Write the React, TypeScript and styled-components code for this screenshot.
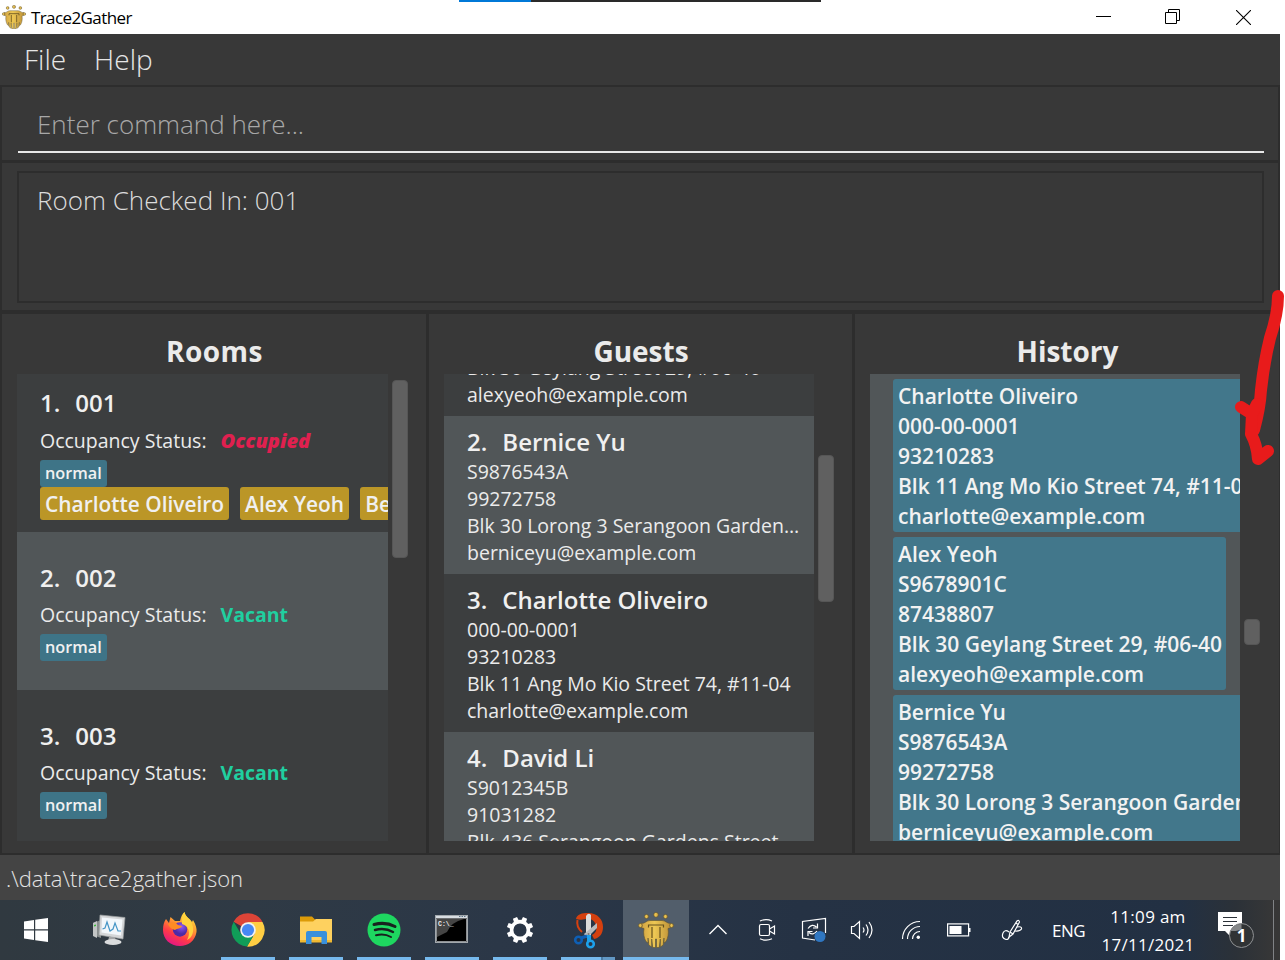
import React from "react";
import styled, { createGlobalStyle, css } from "styled-components";

const Global = createGlobalStyle`
  * { box-sizing: border-box; }
  html, body { margin: 0; padding: 0; background: #fff; overflow: hidden; }
  body { font-family: "Open Sans", "Noto Sans", sans-serif; }
`;

const Desktop = styled.div`
  position: relative;
  width: 1285px;
  height: 960px;
  overflow: hidden;
  background: #fff;
`;

const Window = styled.div`
  width: 1280px;
  height: 900px;
  display: flex;
  flex-direction: column;
  background: #383838;
`;

const TitleBar = styled.header`
  position: relative;
  height: 34px;
  flex: none;
  display: flex;
  align-items: center;
  padding: 0 2px;
  background: #fff;
  color: #000;
`;

const TitleText = styled.span`
  flex: 1;
  margin-left: 5px;
  font-size: 17px;
  letter-spacing: -0.6px;
  line-height: 32px;
  padding-top: 2px;
`;

const TopProgress = styled.div`
  position: absolute;
  left: 459px;
  top: 0;
  width: 362px;
  height: 2px;
  background: linear-gradient(to right, #0078d7 72px, #2a2a2a 72px);
`;

const WindowButton = styled.div`
  width: 70px;
  height: 34px;
  display: flex;
  align-items: center;
  justify-content: center;
`;

const MenuBar = styled.nav`
  height: 51px;
  flex: none;
  display: flex;
  padding-left: 24px;
  gap: 28px;
`;

const MenuItem = styled.span`
  font-size: 28px;
  font-weight: 300;
  line-height: 51px;
  color: #e6e6e6;
`;

const paneBorder = css`
  border: 2px solid #2d2d2d;
`;

const CommandPane = styled.section`
  ${paneBorder}
  border-bottom-width: 1px;
  height: 76px;
  flex: none;
  padding: 12px 14px 0 16px;
`;

const CommandField = styled.div`
  height: 54px;
  border-bottom: 2px solid #e8e8e8;
  padding-left: 19px;
  font-size: 26px;
  font-weight: 300;
  line-height: 50px;
  color: #a8a8a8;
`;

const ResultPane = styled.section`
  ${paneBorder}
  height: 151px;
  flex: none;
  padding: 8px 14px 8px 15px;
`;

const ResultBox = styled.div`
  ${paneBorder}
  height: 132px;
  padding: 9px 18px;
  font-size: 26px;
  font-weight: 300;
  line-height: 37px;
  color: #dcdcdc;
`;

const Columns = styled.main`
  display: flex;
  height: 543px;
  flex: none;
`;

const Column = styled.section<{ $w: number }>`
  ${paneBorder}
  border-right-width: 1px;
  width: ${(p) => p.$w}px;
  padding: 15px 15px 0;
  flex: none;
`;

const Heading = styled.h2<{ $ls?: number }>`
  margin: 0;
  height: 45px;
  padding-left: 1px;
  font-size: 28px;
  font-weight: 700;
  line-height: 44px;
  letter-spacing: ${(p) => p.$ls ?? 0}px;
  text-align: center;
  color: #ebebeb;
`;

const ListArea = styled.div`
  display: flex;
  height: 467px;
`;

const List = styled.div<{ $w: number; $scroll?: number }>`
  width: ${(p) => p.$w}px;
  height: 467px;
  overflow: hidden;
  background: #3c3e3f;
  flex: none;
  & > :first-child { margin-top: ${(p) => -(p.$scroll ?? 0)}px; }
`;

const Track = styled.div<{ $top: number; $h: number }>`
  width: 16px;
  height: ${(p) => p.$h}px;
  margin: ${(p) => p.$top}px 0 0 4px;
  border-radius: 4px;
  background: #606060;
  border: 1px solid #565656;
  flex: none;
`;

const Row = styled.article<{ $alt?: boolean; $top: number }>`
  height: 158px;
  padding: ${(p) => p.$top}px 0 0 23px;
  background: ${(p) => (p.$alt ? "#515658" : "#3c3e3f")};
  white-space: nowrap;
  overflow: hidden;
  color: #f0f0f0;
`;

const Name = styled.div`
  display: flex;
  gap: 15px;
  font-size: 24px;
  font-weight: 600;
  line-height: 33px;
`;

const Detail = styled.div`
  width: 335px;
  font-size: 19.5px;
  font-weight: 400;
  line-height: 27px;
  overflow: hidden;
  text-overflow: ellipsis;
  color: #ebebeb;
`;

const StatusLine = styled.div<{ $gap: number }>`
  display: flex;
  gap: 14px;
  margin: ${(p) => p.$gap}px 0 6px;
  font-size: 19.5px;
  line-height: 27px;
  color: #ebebeb;
`;

const Status = styled.span<{ $occupied?: boolean }>`
  font-weight: ${(p) => (p.$occupied ? 800 : 700)};
  font-size: ${(p) => (p.$occupied ? 20 : 19.5)}px;
  font-style: ${(p) => (p.$occupied ? "italic" : "normal")};
  color: ${(p) => (p.$occupied ? "#e0204f" : "#20cfa0")};
`;

const Tags = styled.div`
  display: flex;
  gap: 11px;
`;

const Tag = styled.span`
  padding: 0 5px;
  border-radius: 3px;
  background: #3e7487;
  font-size: 16.3px;
  font-weight: 600;
  line-height: 27px;
`;

const GuestTag = styled.span`
  height: 33px;
  padding: 1px 5px 0;
  border-radius: 3px;
  background: #bb9627;
  font-size: 20.9px;
  font-weight: 600;
  line-height: 33px;
`;

const HistoryList = styled(List)`
  background: #515658;
  padding: 5px 0 0 23px;
  display: flex;
  flex-direction: column;
  align-items: flex-start;
  gap: 5px;
`;

const HistoryCard = styled.article`
  flex: none;
  height: 153px;
  padding: 2px 4px 0 5px;
  border-radius: 3px;
  background: #42778b;
  font-size: 21px;
  font-weight: 600;
  line-height: 30px;
  white-space: nowrap;
  color: #f2f2f2;
`;

const StatusBar = styled.footer`
  height: 45px;
  flex: none;
  padding-left: 6px;
  font-size: 22px;
  font-weight: 300;
  line-height: 47px;
  color: #e4e4e4;
  background: #444;
`;

const Taskbar = styled.div`
  width: 1280px;
  height: 60px;
  display: flex;
  color: #fff;
  background: linear-gradient(to right, #303940 0, #2f3a45 250px, #2b3747 500px, #253244 800px, #223043 1180px, #2b3138 1235px, #373737 1275px);
`;

const TaskButton = styled.div<{ $w: number; $open?: boolean; $active?: boolean; $stack?: boolean }>`
  position: relative;
  width: ${(p) => p.$w}px;
  height: 60px;
  flex: none;
  display: flex;
  align-items: center;
  justify-content: center;
  background: ${(p) => (p.$active ? "#525e6b" : "transparent")};
  ${(p) =>
    (p.$open || p.$active) &&
    css`
      &::after {
        content: "";
        position: absolute;
        bottom: 0;
        left: ${p.$active ? 0 : 7}px;
        width: ${p.$active ? p.$w : 54}px;
        height: 3px;
        background: ${p.$stack ? "linear-gradient(to right, #76b9ed 40px, #4b7ba3 40px, #4b7ba3 42px, #6298c4 42px)" : "#76b9ed"};
      }
    `}
`;

const Tray = styled.div<{ $w: number }>`
  width: ${(p) => p.$w}px;
  height: 60px;
  flex: none;
  display: flex;
  align-items: center;
  justify-content: center;
`;

const Lang = styled.div`
  width: 63px;
  margin-left: -8px;
  flex: none;
  text-align: center;
  font-size: 17px;
  letter-spacing: -0.5px;
  line-height: 61px;
`;

const Clock = styled.div`
  width: 98px;
  flex: none;
  padding: 3px 2px 0 0;
  text-align: center;
  font-size: 17px;
  line-height: 28px;
  letter-spacing: 0.3px;
  white-space: nowrap;
`;

const ShowDesktop = styled.div`
  width: 2px;
  height: 60px;
  margin-left: auto;
  margin-right: 6px;
  background: #808386;
`;

const Annotation = styled.svg`
  position: absolute;
  left: 1225px;
  top: 280px;
`;

function Shield({ size }: { size: number }) {
  return (
    <svg width={size} height={size} viewBox="0 0 36 36">
      <defs>
        <linearGradient id="gold" x1="0" x2="1">
          <stop offset="0" stopColor="#d1a443" />
          <stop offset="0.45" stopColor="#edc753" />
          <stop offset="1" stopColor="#bd9138" />
        </linearGradient>
      </defs>
      <g fill="url(#gold)" stroke="#5c5231" strokeWidth="0.6">
        <circle cx="8.500" cy="4.500" r="2.100" />
        <circle cx="18" cy="2.800" r="2.400" />
        <circle cx="27.500" cy="4.500" r="2.100" />
        <path d="M3 11.300C7 12 8 8.500 12 8.500H24C28 8.500 29 12 33 11.300V15.500L30 16.500C31 21 30 26 28 29.500L26 31V26L25.200 33L22.300 35V27L21.300 35.500H18.500V27H17.500V35.500H14.700L13.700 27V35L10.800 33L10 26V31L8 29.500C6 26 5 21 6 16.500L3 15.500Z" />
        <circle cx="2.400" cy="13.500" r="2" />
        <circle cx="33.600" cy="13.500" r="2" />
      </g>
      <path d="M10.500 15.500V13H25.500V15.500M14 15V26M22 15V26" fill="none" stroke="#66521f" strokeWidth="1.200" />
    </svg>
  );
}

function WindowsLogo() {
  return (
    <svg width="24" height="24" viewBox="0 0 24 24" fill="#fff">
      <path d="M0 3.400L10 2V11.300H0ZM11.200 1.800L24 0V11.300H11.200ZM0 12.600H10V22L0 20.600ZM11.200 12.600H24V24L11.200 22.200Z" />
    </svg>
  );
}

function Monitor() {
  return (
    <svg width="34" height="32" viewBox="0 0 34 32">
      <path d="M1 9L9 6V24L1 21Z" fill="#888d8d" />
      <path d="M1 9L5 7V24L1 22Z" fill="#c2c5c5" />
      <path d="M2 11L4 10.500V12L2 12.500Z" fill="#3cba3c" />
      <path d="M8 1L33 3.500L31 25L7 21Z" fill="#d4d6d8" stroke="#9a9d9f" strokeWidth=".7" />
      <path d="M10 3.500L30.500 5.500L29 21.500L9.500 18.500Z" fill="#f2f7fb" />
      <path d="M10.500 15L13 14L15 8L18 17L21 15L23 9L26 17L29 17" fill="none" stroke="#4595c6" strokeWidth="1.200" />
      <path d="M17 23H23L24 27H16Z" fill="#a3a5a7" />
      <ellipse cx="21" cy="28" rx="8.500" ry="3" fill="#dadcdd" />
    </svg>
  );
}

function Firefox() {
  return (
    <svg width="36" height="38" viewBox="0 0 36 38">
      <defs>
        <linearGradient id="fox" x1=".8" y1="0" x2=".3" y2="1">
          <stop offset="0" stopColor="#fff044" />
          <stop offset=".4" stopColor="#ff9831" />
          <stop offset=".7" stopColor="#ff3b47" />
          <stop offset="1" stopColor="#e21587" />
        </linearGradient>
        <radialGradient id="globe" cx=".6" cy=".3">
          <stop offset="0" stopColor="#9059f4" />
          <stop offset="1" stopColor="#4e2aa5" />
        </radialGradient>
      </defs>
      <path d="M4 8L7 12L8.500 6L13 10L18 10C19 6 20 3 22.500 1C23 6 28 7 30 11L31 9C34 14 35 18 34.500 21C33 30 26 35 18 35C8 35 1 28 1 19C1 14 2 11 4 8Z" fill="url(#fox)" />
      <circle cx="18" cy="18.500" r="7.200" fill="url(#globe)" />
      <path d="M6 13C10 10 14 11 16 14L20 15C19 18 15 17 13 19Q8 18 6 13Z" fill="#ff8b24" />
      <path d="M20 9C20 5 21 3 22.500 1C23 6 29 8 30 13C33 20 30 27 25 29C29 22 27 15 20 13Z" fill="#ffd23d" />
    </svg>
  );
}

function Chrome() {
  return (
    <svg width="34" height="34" viewBox="0 0 34 34">
      <path d="M17 17L2.600 8.700A16.600 16.600 0 0 1 31.400 8.700Z" fill="#dc4437" />
      <path d="M17 9H31.500A16.600 16.600 0 0 1 16 33.600L24 20Z" fill="#ffce43" />
      <path d="M2.700 8.700L10 21L17 24L22 23.500L16 33.600A16.600 16.600 0 0 1 2.700 8.700Z" fill="#109d58" />
      <circle cx="17" cy="17" r="7.800" fill="#f1f1f1" />
      <circle cx="17" cy="17" r="6.100" fill="#4688f4" />
    </svg>
  );
}

function Folder() {
  return (
    <svg width="34" height="30" viewBox="0 0 34 30">
      <path d="M1 1.500H13L16 4.500H20V12H1Z" fill="#dc9b08" />
      <path d="M1 6.500H14L17 4H33V27H1Z" fill="#fed15f" />
      <path d="M1 25H33V27.500H1Z" fill="#f0b932" />
      <path d="M7 29V18Q7 16 9 16H26Q28 16 28 18V29H22.500V22H12.500V29Z" fill="#3990dc" />
    </svg>
  );
}

function Spotify() {
  return (
    <svg width="34" height="34" viewBox="0 0 34 34">
      <circle cx="17" cy="17" r="16.500" fill="#1ed760" />
      <g fill="none" stroke="#18211e" strokeLinecap="round">
        <path d="M7 11.500Q18.500 8.500 28 13.500" strokeWidth="3" />
        <path d="M8 17Q18 14.500 26 19" strokeWidth="2.500" />
        <path d="M9 22.300Q17.500 20.300 24 24" strokeWidth="2" />
      </g>
    </svg>
  );
}

const PromptGlyphs = styled.text`
  font-family: "Liberation Mono", monospace;
  font-size: 6.5px;
  font-weight: 700;
`;

function Terminal() {
  return (
    <svg width="34" height="30" viewBox="0 0 34 30">
      <rect x=".5" y=".5" width="32" height="27" fill="#000" stroke="#a2a8ad" />
      <path d="M1 1H32V3.500H1Z" fill="#d8dde2" />
      <path d="M24 1.500H31" stroke="#5e7488" strokeDasharray="1.500 1" />
      <path d="M2 4H29Q16 7 12 17L2 22Z" fill="#454545" />
      <path d="M1.500 4V26.500H31.500V4" fill="none" stroke="#8c8f92" />
      <PromptGlyphs x="3" y="10.500" fill="#eee">C:\_</PromptGlyphs>
    </svg>
  );
}

function Gear() {
  const teeth = [0, 45, 90, 135, 180, 225, 270, 315];
  return (
    <svg width="28" height="28" viewBox="-14 -14 28 28">
      {teeth.map((a) => (
        <path key={a} d="M-2.700 -8L-2.200 -13.200H2.200L2.700 -8Z" fill="#fff" transform={`rotate(${a + 22.5})`} />
      ))}
      <circle r="8.400" fill="none" stroke="#fff" strokeWidth="3.600" />
    </svg>
  );
}

function Snip() {
  return (
    <svg width="32" height="38" viewBox="0 0 32 38">
      <path d="M3 8C4 3 9 2 15 2C25 2 30 9 30 16C30 22 27 27 21 28L19 24C23 22 24 19 23 15C22 9 17 7 13 8C8 9 6 9 3 8Z" fill="#d5400f" />
      <path d="M4.500 9Q3 16 9 21" fill="none" stroke="#d5400f" strokeWidth="2" />
      <path d="M13 5Q15.500 1 18 4V26H13Z" fill="#dcdcdc" />
      <path d="M24 12L24 17L14 27L11 23Z" fill="#b8babc" />
      <circle cx="5.500" cy="29" r="3.300" fill="none" stroke="#0e5fb5" strokeWidth="2.600" />
      <path d="M8 27L14 25" stroke="#0e5fb5" strokeWidth="3" />
      <circle cx="17.500" cy="33" r="3.300" fill="none" stroke="#1da1ec" strokeWidth="2.600" />
      <path d="M16 24V30" stroke="#1da1ec" strokeWidth="4" />
      <circle cx="15.500" cy="23" r="1" fill="#777" />
    </svg>
  );
}

function ChevronUp() {
  return (
    <svg width="20" height="12" viewBox="0 0 20 12">
      <path d="M1.500 10L10 1.500L18.500 10" fill="none" stroke="#fff" strokeWidth="1.400" />
    </svg>
  );
}

function MeetNow() {
  return (
    <svg width="18" height="24" viewBox="0 0 18 24" fill="none" stroke="#fff" strokeWidth="1.200">
      <rect x="1.500" y="6.500" width="10" height="11" rx="1.500" />
      <path d="M11.500 11L16.500 8V16L11.500 13M2 3Q8 .2 14 3M2 20.800Q8 23.600 14 20.800" />
    </svg>
  );
}

function UpdateIcon() {
  return (
    <svg width="26" height="26" viewBox="0 0 26 26" fill="none" stroke="#fff" strokeWidth="1.200">
      <path d="M14 23L1.500 21V4.500L24.500 1.500V16" />
      <path d="M7 11.500Q11 6 15.500 10M16.500 6.500V11H12M16 14Q12 19 8 15.500M7 19V14.500H11.500" />
      <circle cx="19" cy="19.500" r="5.500" fill="#2f76c1" stroke="none" />
    </svg>
  );
}

function Speaker() {
  return (
    <svg width="24" height="20" viewBox="0 0 24 20" fill="none" stroke="#fff" strokeWidth="1.200">
      <path d="M1.500 6.500H4L9.500 1.500V18.500L4 13.500H1.500Z" />
      <path d="M13 7.500Q15 10 13 12.500M16 4.500Q20 10 16 15.500M19 2Q25 10 19 18" />
    </svg>
  );
}

function Wifi() {
  return (
    <svg width="20" height="20" viewBox="0 0 20 20" fill="none" stroke="#fff" strokeWidth="1.200">
      <path d="M1.500 19A17.500 17.500 0 0 1 19 1.500M6.500 19A12.500 12.500 0 0 1 19 6.500M11.500 19A7.500 7.500 0 0 1 19 11.500" />
      <circle cx="17.300" cy="17.300" r="1.700" fill="#fff" stroke="none" />
    </svg>
  );
}

function Battery() {
  return (
    <svg width="24" height="14" viewBox="0 0 24 14">
      <rect x=".6" y=".9" width="21" height="12" fill="none" stroke="#fff" strokeWidth="1.200" />
      <path d="M2.500 3H14.500V11H2.500ZM22 5H23.500V9H22Z" fill="#fff" />
    </svg>
  );
}

function PenIcon() {
  return (
    <svg width="22" height="22" viewBox="0 0 22 22" fill="none" stroke="#fff" strokeWidth="1.200">
      <path d="M8 18L9 13L16 2Q18 .5 18.500 3L12 15ZM15 4L17 5.500M9 13L12 15" />
      <path d="M8 13Q4 10 2 14Q0 19 5 20.500Q8 20.500 8 18M16 8Q21 7 20.500 10Q19 12.500 14 12" />
    </svg>
  );
}

const BadgeText = styled.text`
  font-family: "Open Sans", sans-serif;
  font-size: 17px;
  font-weight: 700;
`;

function Notifications() {
  return (
    <svg width="38" height="38" viewBox="0 0 38 38">
      <path d="M1 1H25V20H13V25L8 20H1Z" fill="#fff" />
      <path d="M6 6.500H20M6 10.500H20M6 14.500H16" stroke="#2b3138" strokeWidth="1.200" />
      <circle cx="24.500" cy="24.500" r="12" fill="#303335" stroke="#8f9193" />
      <path d="M13.500 20A12 12 0 0 1 24.500 13V18Q22 20 16 20Z" fill="#858789" />
      <BadgeText x="24.500" y="30.500" fill="#fff" textAnchor="middle">1</BadgeText>
    </svg>
  );
}

const rooms = [
  { id: 1, name: "001", occupied: true, guests: ["Charlotte Oliveiro", "Alex Yeoh", "Bernice Yu"] },
  { id: 2, name: "002", occupied: false, guests: [] },
  { id: 3, name: "003", occupied: false, guests: [] },
];

const guests = [
  { name: "Alex Yeoh", lines: ["S9678901C", "87438807", "Blk 30 Geylang Street 29, #06-40", "alexyeoh@example.com"] },
  { name: "Bernice Yu", lines: ["S9876543A", "99272758", "Blk 30 Lorong 3 Serangoon Gardens, #07-18", "berniceyu@example.com"] },
  { name: "Charlotte Oliveiro", lines: ["000-00-0001", "93210283", "Blk 11 Ang Mo Kio Street 74, #11-04", "charlotte@example.com"] },
  { name: "David Li", lines: ["S9012345B", "91031282", "Blk 436 Serangoon Gardens Street 26, #16-43", "lidavid@example.com"] },
];

const history = [guests[2], guests[0], guests[1]];

export default function App() {
  return (
    <Desktop>
      <Global />
      <Window>
        <TitleBar>
          <Shield size={24} />
          <TitleText>Trace2Gather</TitleText>
          <TopProgress />
          <WindowButton>
            <svg width="15" height="15"><path d="M0 6.500H15" stroke="#000" /></svg>
          </WindowButton>
          <WindowButton>
            <svg width="17" height="16" fill="none" stroke="#000">
              <path d="M.5 3.500H11.500V14.500H.5ZM3.500 3.500V.5H14.500V11.500H11.500" />
            </svg>
          </WindowButton>
          <WindowButton>
            <svg width="15" height="15"><path d="M0 0L15 15M15 0L0 15" stroke="#000" strokeWidth="1.100" /></svg>
          </WindowButton>
        </TitleBar>
        <MenuBar>
          <MenuItem>File</MenuItem>
          <MenuItem>Help</MenuItem>
        </MenuBar>
        <CommandPane>
          <CommandField>Enter command here...</CommandField>
        </CommandPane>
        <ResultPane>
          <ResultBox>Room Checked In: 001</ResultBox>
        </ResultPane>
        <Columns>
          <Column $w={427}>
            <Heading $ls={0.5}>Rooms</Heading>
            <ListArea>
              <List $w={371}>
                {rooms.map((r, i) => (
                  <Row key={r.id} $alt={i % 2 === 1} $top={r.occupied ? 12 : 29}>
                    <Name><span>{r.id}.</span><span>{r.name}</span></Name>
                    <StatusLine $gap={r.occupied ? 8 : 7}>
                      <span>Occupancy Status:</span>
                      <Status $occupied={r.occupied}>{r.occupied ? "Occupied" : "Vacant"}</Status>
                    </StatusLine>
                    <Tags><Tag>normal</Tag></Tags>
                    <Tags>{r.guests.map((g) => <GuestTag key={g}>{g}</GuestTag>)}</Tags>
                  </Row>
                ))}
              </List>
              <Track $top={6} $h={178} />
            </ListArea>
          </Column>
          <Column $w={426}>
            <Heading>Guests</Heading>
            <ListArea>
              <List $w={370} $scroll={116}>
                {guests.map((g, i) => (
                  <Row key={g.name} $alt={i % 2 === 1} $top={9}>
                    <Name><span>{i + 1}.</span><span>{g.name}</span></Name>
                    {g.lines.map((l) => <Detail key={l}>{l}</Detail>)}
                  </Row>
                ))}
              </List>
              <Track $top={81} $h={147} />
            </ListArea>
          </Column>
          <Column $w={427}>
            <Heading>History</Heading>
            <ListArea>
              <HistoryList $w={370}>
                {history.map((g) => (
                  <HistoryCard key={g.name}>
                    {[g.name, ...g.lines].map((l) => <div key={l}>{l}</div>)}
                  </HistoryCard>
                ))}
              </HistoryList>
              <Track $top={245} $h={26} />
            </ListArea>
          </Column>
        </Columns>
        <StatusBar>.\data\trace2gather.json</StatusBar>
      </Window>
      <Taskbar>
        <TaskButton $w={72}><WindowsLogo /></TaskButton>
        <TaskButton $w={73}><Monitor /></TaskButton>
        <TaskButton $w={69}><Firefox /></TaskButton>
        <TaskButton $w={68} $open><Chrome /></TaskButton>
        <TaskButton $w={68} $open><Folder /></TaskButton>
        <TaskButton $w={68} $open><Spotify /></TaskButton>
        <TaskButton $w={68} $open><Terminal /></TaskButton>
        <TaskButton $w={68} $open><Gear /></TaskButton>
        <TaskButton $w={69} $open $stack><Snip /></TaskButton>
        <TaskButton $w={66} $active><Shield size={36} /></TaskButton>
        <Tray $w={58}><ChevronUp /></Tray>
        <Tray $w={40}><MeetNow /></Tray>
        <Tray $w={54}><UpdateIcon /></Tray>
        <Tray $w={42}><Speaker /></Tray>
        <Tray $w={56}><Wifi /></Tray>
        <Tray $w={40}><Battery /></Tray>
        <Tray $w={66}><PenIcon /></Tray>
        <Lang>ENG</Lang>
        <Clock><div>11:09 am</div><div>17/11/2021</div></Clock>
        <Tray $w={75}><Notifications /></Tray>
        <ShowDesktop />
      </Taskbar>
      <Annotation width="60" height="200" viewBox="1225 280 60 200" fill="none" stroke="#e81b1b" strokeWidth="12" strokeLinecap="round" strokeLinejoin="round">
        <path d="M1278 296Q1278 314 1270 338Q1264 362 1261 390Q1260 408 1254 430" />
        <path d="M1241 407L1252 414L1251 434Q1257 445 1258 459L1268 451M1252 414L1257 404" />
      </Annotation>
    </Desktop>
  );
}
